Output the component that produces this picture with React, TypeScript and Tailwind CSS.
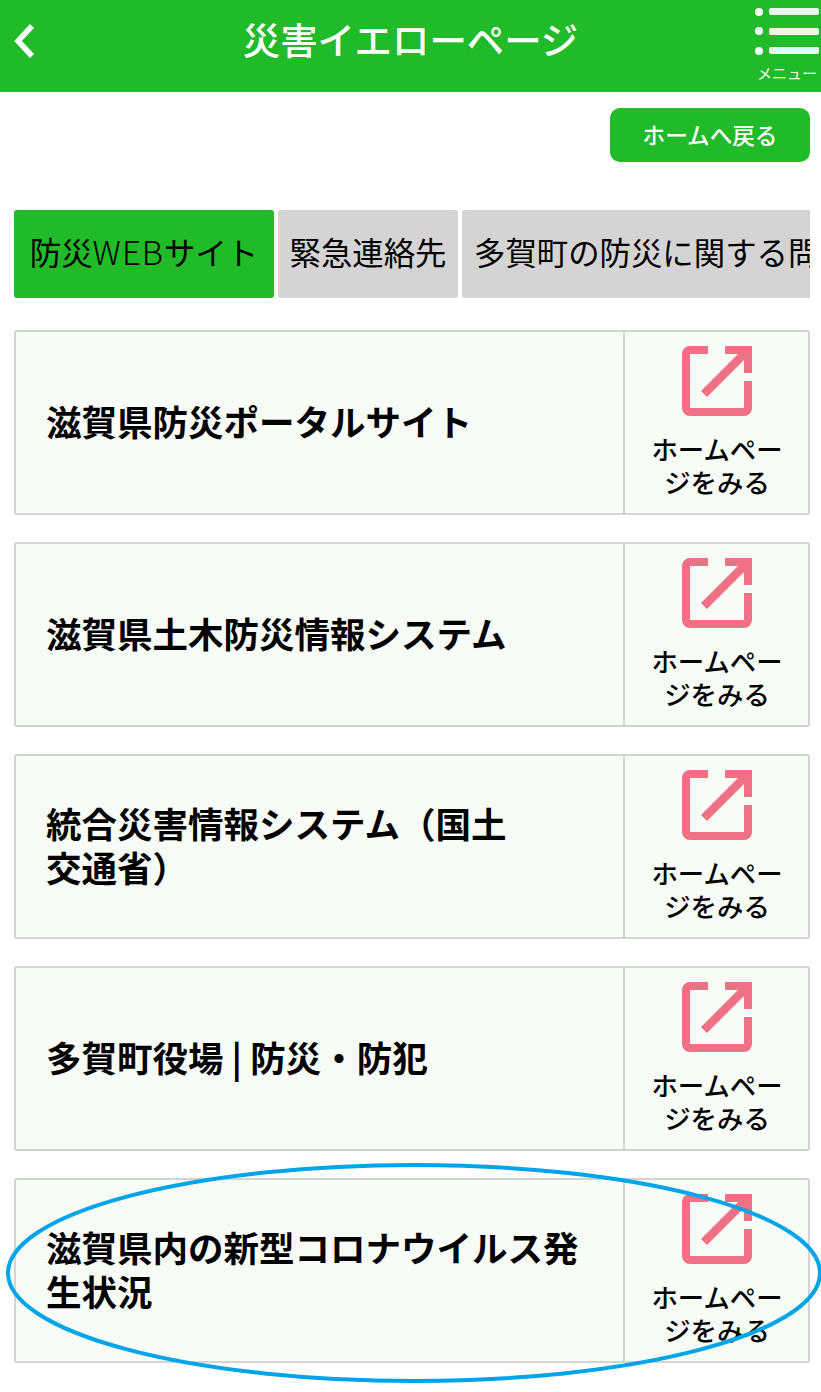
const FONT = "font-['Noto_Sans_CJK_JP','Noto_Sans',sans-serif]";

const LINKS = [
  '滋賀県防災ポータルサイト',
  '滋賀県土木防災情報システム',
  '統合災害情報システム（国土\n交通省）',
  '多賀町役場 | 防災・防犯',
  '滋賀県内の新型コロナウイルス発\n生状況',
];

function ExternalIcon() {
  return (
    <svg width="70" height="70" viewBox="0 0 70 70" className="block">
      <path
        d="M26 0H8a8 8 0 0 0-8 8v54a8 8 0 0 0 8 8h54a8 8 0 0 0 8-8V35h-8v27H8V8h18z"
        fill="#f07186"
      />
      <path d="M43 0h27v27h-8V14L25 51l-6-6L56 8H43z" fill="#f07186" />
    </svg>
  );
}

function LinkCard({ title }: { title: string }) {
  return (
    <div className="flex h-[185px] rounded-[3px] border-2 border-[#d4d4d4] bg-[#f7fcf7]">
      <div className="flex w-[609px] items-center border-r-2 border-[#d4d4d4] pl-[30px]">
        <p className="-mt-[3px] whitespace-pre-line text-[35.5px] font-bold leading-[44px] text-black">{title}</p>
      </div>
      <div className="flex flex-1 flex-col items-center pl-[1px] pt-[14px]">
        <ExternalIcon />
        <p className="mt-[16px] w-[134px] text-center text-[26.4px] font-medium leading-[33px] text-black">
          ホームページをみる
        </p>
      </div>
    </div>
  );
}

export default function App() {
  return (
    <div className={`relative h-[1392px] w-[821px] overflow-hidden bg-white ${FONT}`}>
      {/* ヘッダー */}
      <header className="relative flex h-[92px] items-center justify-center bg-[#21ba28]">
        <svg width="24" height="36" viewBox="0 0 24 36" className="absolute left-[13px] top-[23px]">
          <path d="M19 3 5 18l14 15" fill="none" stroke="#fff" strokeWidth="5.5" />
        </svg>
        <h1 className="-mt-[12px] text-[37.4px] font-medium leading-none text-white">災害イエローページ</h1>
        <div className="absolute right-0 top-0 w-[66px]">
          <div className="mt-[8px] flex flex-col gap-[12.5px]">
            {[0, 1, 2].map((i) => (
              <div key={i} className="flex h-[7px] items-center gap-[6px]">
                <span className="size-[8px] shrink-0 rounded-full bg-white" />
                <span className="h-[7px] w-[50px] shrink-0 rounded-[2px] bg-white/90" />
              </div>
            ))}
          </div>
          <p className="mt-[10px] whitespace-nowrap pl-[2px] text-[15px] leading-[18px] text-white">メニュー</p>
        </div>
      </header>

      <main className="px-[14px] pr-[11px]">
        {/* ホームへ戻る */}
        <div className="flex justify-end pt-[16px]">
          <button className="h-[54px] w-[200px] rounded-[10px] bg-[#21ba28] text-[22.6px] font-medium text-white">
            ホームへ戻る
          </button>
        </div>

        {/* タブ */}
        <div className="mt-[48px] flex h-[88px] gap-[4px] overflow-hidden text-[31.4px] text-black">
          <div className="flex w-[260px] shrink-0 items-center justify-center rounded-[3px] bg-[#21ba28] pb-[4px]">
            防災<span className="text-[33px] font-light tracking-[1px]">WEB</span>サイト
          </div>
          <div className="flex w-[180px] shrink-0 items-center justify-center rounded-[3px] bg-[#d4d4d4] pb-[4px]">
            緊急連絡先
          </div>
          <div className="flex shrink-0 items-center whitespace-nowrap rounded-[3px] bg-[#d4d4d4] px-[12px] pb-[4px]">
            多賀町の防災に関する問い合わせ
          </div>
        </div>

        {/* リンク一覧 */}
        <div className="mt-[32px] flex flex-col gap-[27px]">
          {LINKS.map((title) => (
            <LinkCard key={title} title={title} />
          ))}
        </div>
      </main>

      {/* 手書きの丸 */}
      <svg width="821" height="1392" className="pointer-events-none absolute inset-0">
        <ellipse cx="414" cy="1273" rx="406" ry="108" fill="none" stroke="#00a4e8" strokeWidth="4" />
      </svg>
    </div>
  );
}
